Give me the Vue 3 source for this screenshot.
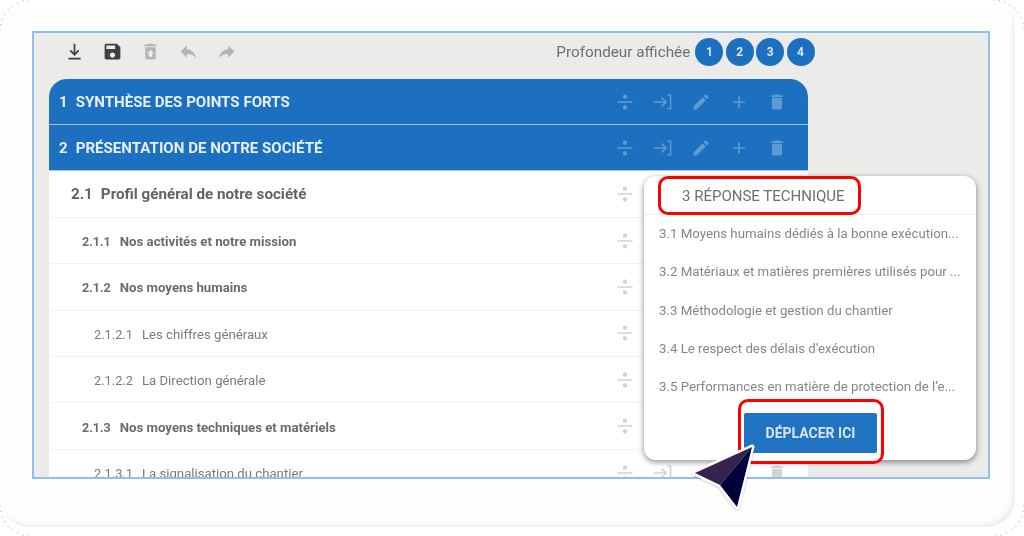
<script setup>
const icons = {
  download: 'M5 19h14v2H5v-2zm7-2-5.5-5.5 1.4-1.4 3.1 3.1V3h2v10.2l3.1-3.1 1.4 1.4L12 17z',
  save: 'M17 3H5c-1.11 0-2 .9-2 2v14c0 1.1.89 2 2 2h14c1.1 0 2-.9 2-2V7l-4-4zm-5 16c-1.66 0-3-1.34-3-3s1.34-3 3-3 3 1.34 3 3-1.34 3-3 3zm3-10H5V5h10v4z',
  restore: 'M19 4h-3.5l-1-1h-5l-1 1H5v2h14zM6 7v12c0 1.1.9 2 2 2h8c1.1 0 2-.9 2-2V7H6zm8 7v4h-4v-4H8l4-4 4 4h-2z',
  undo: 'M10 9V5l-7 7 7 7v-4.1c5 0 8.5 1.6 11 5.1-1-5-4-10-11-11z',
  redo: 'M14 9V5l7 7-7 7v-4.1c-5 0-8.5 1.6-11 5.1 1-5 4-10 11-11z',
  split: 'M3 11h18v2H3z M12 3a2.6 2.6 0 1 1 0 5.2a2.6 2.6 0 1 1 0-5.2z M12 15.8a2.6 2.6 0 1 1 0 5.2a2.6 2.6 0 1 1 0-5.2z',
  move: 'M1 11h12.2l-3.6-3.6L11 6l6 6-6 6-1.4-1.4 3.6-3.6H1v-2z M17 3h5v18h-5v-1.6h3.2V4.6H17V3z',
  edit: 'M3 17.25V21h3.75L17.81 9.94l-3.75-3.75L3 17.25zM20.71 7.04c.39-.39.39-1.02 0-1.41l-2.34-2.34c-.39-.39-1.02-.39-1.41 0l-1.83 1.83 3.75 3.75 1.83-1.83z',
  add: 'M19 13h-6v6h-2v-6H5v-2h6V5h2v6h6v2z',
  trash: 'M6 19c0 1.1.9 2 2 2h8c1.1 0 2-.9 2-2V7H6v12zM19 4h-3.5l-1-1h-5l-1 1H5v2h14V4z'
}
const tools = [
  { icon: 'download', cls: 'on' },
  { icon: 'save', cls: 'on' },
  { icon: 'restore', cls: 'off' },
  { icon: 'undo', cls: 'off' },
  { icon: 'redo', cls: 'off' }
]
const actions = ['split', 'move', 'edit', 'add', 'trash']
const levels = [1, 2, 3, 4]
const rows = [
  { n: '1', t: 'SYNTHÈSE DES POINTS FORTS', l: 0 },
  { n: '2', t: 'PRÉSENTATION DE NOTRE SOCIÉTÉ', l: 0 },
  { n: '2.1', t: 'Profil général de notre société', l: 1 },
  { n: '2.1.1', t: 'Nos activités et notre mission', l: 2 },
  { n: '2.1.2', t: 'Nos moyens humains', l: 2 },
  { n: '2.1.2.1', t: 'Les chiffres généraux', l: 3 },
  { n: '2.1.2.2', t: 'La Direction générale', l: 3 },
  { n: '2.1.3', t: 'Nos moyens techniques et matériels', l: 2 },
  { n: '2.1.3.1', t: 'La signalisation du chantier', l: 3 }
]
const items = [
  '3.1 Moyens humains dédiés à la bonne exécution...',
  '3.2 Matériaux et matières premières utilisés pour ...',
  '3.3 Méthodologie et gestion du chantier',
  '3.4 Le respect des délais d’exécution',
  '3.5 Performances en matière de protection de l’e...'
]
</script>

<template>
  <div class="screen">
    <div class="card">
      <section class="panel">
        <header class="toolbar">
          <span v-for="tool in tools" :key="tool.icon" class="tool" :class="tool.cls">
            <svg viewBox="0 0 24 24" width="21" height="21"><path :d="icons[tool.icon]" /></svg>
          </span>
          <div class="depth">
            <span class="depth-label">Profondeur affichée</span>
            <span class="depth-dots">
              <span v-for="n in levels" :key="n" class="dot">{{ n }}</span>
            </span>
          </div>
        </header>
        <div class="tree">
          <div v-for="row in rows" :key="row.n" class="row" :class="'lvl' + row.l">
            <span class="num">{{ row.n }}</span>
            <span class="title">{{ row.t }}</span>
            <span class="actions">
              <span v-for="a in actions" :key="a" class="act">
                <svg viewBox="0 0 24 24" width="20" height="20"><path :d="icons[a]" /></svg>
              </span>
            </span>
          </div>
        </div>
        <aside class="popup">
          <div class="popup-head">
            <span class="popup-title">3 RÉPONSE TECHNIQUE</span>
          </div>
          <ul class="popup-list">
            <li v-for="item in items" :key="item">{{ item }}</li>
          </ul>
          <div class="popup-foot">
            <span class="foot-ring"><button class="move-btn" type="button">DÉPLACER ICI</button></span>
          </div>
        </aside>
      </section>
    </div>
    <svg class="dotted" viewBox="0 0 1024 536" width="1024" height="536">
      <path d="M0 31A31 31 0 0 1 31 0 M993 0A31 31 0 0 1 1024 31 M0 505A31 31 0 0 0 31 536 M1024 505A31 31 0 0 1 993 536" />
    </svg>
    <svg class="cursor" viewBox="0 0 70 72" width="70" height="72">
      <g transform="translate(-690 -440)">
        <polygon class="cur-edge" points="752,447 695,473 720,485 737,507" />
        <polygon fill="#35234f" points="752,447 695,473 720,485" />
        <polygon fill="#01023a" points="752,447 720,485 737,507" />
      </g>
    </svg>
  </div>
</template>

<style>
html, body { margin: 0; background: #fff; overflow: hidden; }
</style>

<style scoped>
.screen {
  position: relative;
  width: 1024px;
  height: 536px;
  overflow: hidden;
  background: #fff;
  font-family: Roboto, "Liberation Sans", sans-serif;
  filter: blur(0.45px);
}
.card {
  box-sizing: border-box;
  width: 1015px;
  height: 527px;
  padding: 31px 0 0 32px;
  background: #fdfdfc;
  border-radius: 0 0 28px 28px;
  box-shadow: inset -3px -3px 4px #eeeeec;
  -webkit-mask-image: linear-gradient(transparent 6px, #000 28px);
  mask-image: linear-gradient(transparent 6px, #000 28px);
}
.dotted {
  position: absolute;
  left: 0;
  top: 0;
  pointer-events: none;
}
.dotted path {
  fill: none;
  stroke: #a8a8a8;
  stroke-width: 1;
  stroke-dasharray: 1.2 4.5;
}
.panel {
  position: relative;
  box-sizing: border-box;
  width: 958px;
  height: 448px;
  overflow: hidden;
  background: #ebebe9;
  border: 2px solid #93bfef;
}
.toolbar {
  display: flex;
  align-items: center;
  box-sizing: border-box;
  height: 45.5px;
  padding: 0 173.5px 8px 21.5px;
}
.tool {
  display: flex;
  justify-content: center;
  width: 38px;
}
.tool svg { display: block; }
.tool.on path { fill: #3f3f46; }
.tool.off path { fill: #b4b6b6; }
.depth {
  display: flex;
  align-items: center;
  margin-left: auto;
}
.depth-label {
  margin-right: 5px;
  font-size: 15.3px;
  color: #6f6f6f;
}
.depth-dots { display: flex; gap: 2.4px; }
.dot {
  display: flex;
  align-items: center;
  justify-content: center;
  width: 28px;
  height: 28px;
  border-radius: 50%;
  background: #1d70bf;
  color: #dbe8f5;
  font-size: 12px;
  font-weight: 700;
}
.tree {
  width: 759px;
  margin-left: 15px;
  background: #fff;
  border-radius: 18px 18px 0 0;
  overflow: hidden;
}
.row {
  display: flex;
  align-items: center;
  box-sizing: border-box;
  height: 46.4px;
  border-bottom: 1px solid #f3f3f3;
  color: #6b6b6b;
}
.num { margin-right: 8px; }
.actions {
  display: flex;
  margin-left: auto;
  padding-right: 12px;
}
.act {
  display: flex;
  justify-content: center;
  width: 38px;
}
.act svg { display: block; }
.act path { fill: #d2d2d2; }
.lvl0 {
  height: 46px;
  padding: 2px 0 0 10px;
  background: #1d70bf;
  border-bottom: 1px solid #a9c6e6;
  color: #e6eff8;
  font-size: 15.1px;
  font-weight: 700;
}
.lvl0 .act path { fill: #5f9ad4; }
.lvl0 + .lvl1 { margin-top: 1px; }
.lvl1 {
  padding-left: 22px;
  font-size: 15.2px;
  font-weight: 700;
  color: #636363;
}
.lvl2 {
  padding: 2px 0 0 33px;
  font-size: 13.2px;
  font-weight: 700;
  color: #6b6b6e;
}
.lvl2 .num {
  margin-right: 9px;
  font-size: 12.5px;
}
.lvl3 {
  padding: 2px 0 0 45px;
  font-size: 13.2px;
  font-weight: 400;
  color: #7b7b7b;
}
.lvl3 .num {
  margin-right: 9px;
  font-size: 12.8px;
}
.lvl2 .actions, .lvl3 .actions { margin-top: -2px; }
.popup {
  position: absolute;
  left: 610px;
  top: 143px;
  box-sizing: border-box;
  width: 332px;
  height: 284px;
  background: #fff;
  border-radius: 12px;
  box-shadow: 0 2px 5px 1px rgba(0, 0, 0, 0.35);
}
.popup-head {
  height: 38px;
  padding-left: 14px;
  border-bottom: 1px solid #eeeeee;
}
.popup-title {
  display: flex;
  align-items: center;
  box-sizing: border-box;
  width: 203px;
  height: 39px;
  padding-left: 21px;
  border: 3px solid #f00;
  border-radius: 10px;
  background: #fff;
  font-size: 15px;
  color: #6e6e6e;
}
.popup-list {
  margin: 0;
  padding: 0 0 0 15px;
  list-style: none;
}
.popup-list li {
  height: 38.3px;
  line-height: 38.3px;
  font-size: 13.25px;
  color: #868686;
  white-space: nowrap;
}
.popup-foot {
  display: flex;
  justify-content: center;
  margin: -7px 0 0 1px;
}
.foot-ring {
  display: flex;
  align-items: center;
  justify-content: center;
  box-sizing: border-box;
  width: 146px;
  height: 65px;
  padding-top: 2px;
  border: 3px solid #f00;
  border-radius: 10px;
  background: #fff;
}
.move-btn {
  width: 133px;
  height: 40px;
  padding: 0;
  border: 0;
  border-radius: 2px;
  background: #1f73c0;
  color: #d6e4f2;
  font-family: inherit;
  font-size: 14px;
  font-weight: 700;
}
.cursor {
  position: absolute;
  left: 690px;
  top: 440px;
  overflow: visible;
  filter: drop-shadow(0 1.5px 1px rgba(0, 0, 0, 0.2));
}
.cur-edge {
  fill: #fff;
  stroke: #fff;
  stroke-width: 5;
  stroke-linejoin: round;
}
</style>
